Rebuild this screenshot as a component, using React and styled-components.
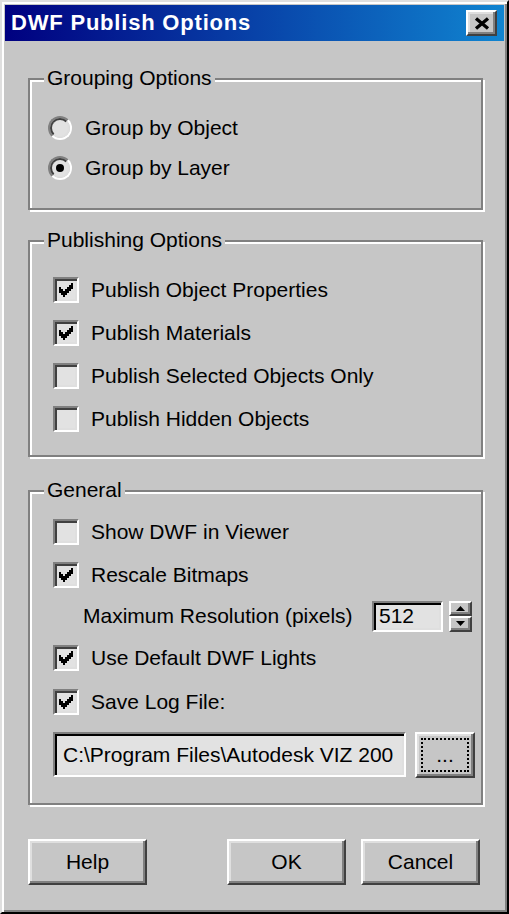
import React from 'react';
import styled, { createGlobalStyle } from 'styled-components';

const FACE = '#c6c6c6';
const FIELD = '#e2e2e2';

const GlobalStyle = createGlobalStyle`
  html, body {
    margin: 0;
    padding: 0;
    background: ${FACE};
  }
  body {
    font-family: "Liberation Sans", Arial, sans-serif;
  }
`;

const Window = styled.div`
  box-sizing: border-box;
  width: 509px;
  height: 914px;
  display: flex;
  flex-direction: column;
  padding: 3px;
  background: ${FACE};
  border: 2px solid;
  border-color: #dfdfdf #000 #000 #dfdfdf;
  box-shadow: inset 2px 2px 0 #fff, inset -2px -2px 0 #808080;
  font-family: "Liberation Sans", Arial, sans-serif;
  font-size: 21px;
  color: #000;
`;

const TitleBar = styled.div`
  flex: none;
  height: 36px;
  display: flex;
  align-items: center;
  justify-content: space-between;
  padding: 0 7px 0 6px;
  background: linear-gradient(90deg, #000080, #1084d0);
`;

const Title = styled.span`
  color: #fff;
  font-weight: bold;
  font-size: 22px;
  letter-spacing: 0.8px;
`;

const CloseButton = styled.button`
  box-sizing: border-box;
  width: 31px;
  height: 26px;
  padding: 0;
  display: flex;
  align-items: center;
  justify-content: center;
  background: ${FACE};
  border: 2px solid;
  border-color: #fff #404040 #404040 #fff;
  box-shadow: inset -2px -2px 0 #808080, inset 2px 2px 0 #dfdfdf;
`;

const Body = styled.div`
  flex: 1;
  display: flex;
  flex-direction: column;
  padding: 37px 21px 0 23px;
`;

const Group = styled.div`
  position: relative;
  box-sizing: border-box;
  height: ${p => p.$h}px;
  margin-top: ${p => p.$mt || 0}px;
  padding-top: ${p => p.$pt}px;
  border: 2px solid #808080;
  box-shadow: inset 2px 2px 0 #fff, 2px 2px 0 #fff;
`;

const GroupLabel = styled.span`
  position: absolute;
  left: 14px;
  top: -14px;
  padding: 0 3px;
  line-height: 24px;
  background: ${FACE};
`;

const Row = styled.div`
  display: flex;
  align-items: center;
  height: ${p => p.$h || 43}px;
  padding-left: ${p => (p.$indent === undefined ? 23 : p.$indent)}px;
  margin-top: ${p => p.$mt || 0}px;
`;

const RadioOuter = styled.span`
  box-sizing: border-box;
  flex: none;
  width: 24px;
  height: 24px;
  margin-right: 13px;
  border-radius: 50%;
  border: 2px solid;
  border-color: #808080 #fff #fff #808080;
  display: flex;
  align-items: center;
  justify-content: center;
`;

const RadioInner = styled.span`
  box-sizing: border-box;
  width: 20px;
  height: 20px;
  border-radius: 50%;
  border: 2px solid;
  border-color: #404040 #dfdfdf #dfdfdf #404040;
  background: ${FIELD};
  display: flex;
  align-items: center;
  justify-content: center;
`;

const Dot = styled.span`
  width: 8px;
  height: 8px;
  border-radius: 50%;
  background: #000;
`;

const Box = styled.span`
  box-sizing: border-box;
  flex: none;
  width: 26px;
  height: 26px;
  margin-right: 12px;
  display: flex;
  align-items: center;
  justify-content: center;
  background: ${FIELD};
  border: 2px solid;
  border-color: #808080 #fff #fff #808080;
  box-shadow: inset 2px 2px 0 #404040, inset -2px -2px 0 #dfdfdf;
`;

const Label = styled.span`
  white-space: nowrap;
  width: ${p => (p.$w ? `${p.$w}px` : 'auto')};
  flex: none;
`;

const Field = styled.div`
  box-sizing: border-box;
  flex: none;
  width: ${p => p.$w}px;
  height: ${p => p.$h}px;
  padding-left: ${p => p.$pl || 4}px;
  display: flex;
  align-items: center;
  overflow: hidden;
  white-space: nowrap;
  background: ${FIELD};
  border: 2px solid;
  border-color: #808080 #fff #fff #808080;
  box-shadow: inset 2px 2px 0 #000, inset -2px -2px 0 #dfdfdf;
`;

const Spin = styled.div`
  display: flex;
  flex-direction: column;
  margin-left: 6px;
  width: 23px;
`;

const SpinButton = styled.button`
  box-sizing: border-box;
  width: 23px;
  height: ${p => p.$h}px;
  padding: 0;
  display: flex;
  align-items: center;
  justify-content: center;
  background: ${FACE};
  border: 2px solid;
  border-color: #fff #404040 #404040 #fff;
  box-shadow: inset -2px -2px 0 #808080;
`;

const Button = styled.button`
  box-sizing: border-box;
  flex: none;
  width: ${p => p.$w}px;
  height: ${p => p.$h || 46}px;
  margin-left: ${p => p.$ml || 0}px;
  padding: ${p => p.$pad || 0}px;
  display: flex;
  align-items: stretch;
  justify-content: center;
  font: inherit;
  color: #000;
  background: ${FACE};
  border: 2px solid;
  border-color: #fff #404040 #404040 #fff;
  box-shadow: inset -2px -2px 0 #808080, inset 2px 2px 0 #dfdfdf;
`;

const ButtonText = styled.span`
  display: flex;
  align-items: center;
  justify-content: center;
  flex: 1;
`;

const FocusRect = styled.span`
  flex: 1;
  display: flex;
  align-items: center;
  justify-content: center;
  border: 2px dotted #000;
`;

const ButtonRow = styled.div`
  display: flex;
  margin-top: 34px;
  padding-right: 3px;
`;

const Spacer = styled.div`
  flex: 1;
`;

const CheckMark = () => (
  <svg width="14" height="14" viewBox="0 0 7 7" shapeRendering="crispEdges">
    <path
      d="M0 2h1v3H0z M1 3h1v3H1z M2 4h1v3H2z M3 3h1v3H3z M4 2h1v3H4z M5 1h1v3H5z M6 0h1v3H6z"
      fill="#000"
    />
  </svg>
);

const Check = ({ checked, children }) => (
  <Row>
    <Box>{checked && <CheckMark />}</Box>
    <Label>{children}</Label>
  </Row>
);

const Radio = ({ checked, children }) => (
  <Row $h={40} $indent={18}>
    <RadioOuter>
      <RadioInner>{checked && <Dot />}</RadioInner>
    </RadioOuter>
    <Label>{children}</Label>
  </Row>
);

const App = () => (
  <>
    <GlobalStyle />
    <Window>
      <TitleBar>
        <Title>DWF Publish Options</Title>
        <CloseButton>
          <svg width="16" height="13" viewBox="0 0 16 13">
            <path d="M2 1.5 L14 11.5 M14 1.5 L2 11.5" stroke="#000" strokeWidth="3.4" />
          </svg>
        </CloseButton>
      </TitleBar>
      <Body>
        <Group $h={132} $pt={28}>
          <GroupLabel>Grouping Options</GroupLabel>
          <Radio>Group by Object</Radio>
          <Radio checked>Group by Layer</Radio>
        </Group>

        <Group $h={217} $pt={26} $mt={30}>
          <GroupLabel>Publishing Options</GroupLabel>
          <Check checked>Publish Object Properties</Check>
          <Check checked>Publish Materials</Check>
          <Check>Publish Selected Objects Only</Check>
          <Check>Publish Hidden Objects</Check>
        </Group>

        <Group $h={315} $pt={18} $mt={33}>
          <GroupLabel>General</GroupLabel>
          <Check>Show DWF in Viewer</Check>
          <Check checked>Rescale Bitmaps</Check>
          <Row $h={40} $indent={53}>
            <Label $w={289}>Maximum Resolution (pixels)</Label>
            <Field $w={71} $h={31} $pl={5}>512</Field>
            <Spin>
              <SpinButton $h={15}>
                <svg width="9" height="5" viewBox="0 0 9 5">
                  <path d="M4.5 0 L9 5 H0 Z" fill="#000" />
                </svg>
              </SpinButton>
              <SpinButton $h={16}>
                <svg width="9" height="5" viewBox="0 0 9 5">
                  <path d="M0 0 H9 L4.5 5 Z" fill="#000" />
                </svg>
              </SpinButton>
            </Spin>
          </Row>
          <Check checked>Use Default DWF Lights</Check>
          <Row $h={45}>
            <Box>
              <CheckMark />
            </Box>
            <Label>Save Log File:</Label>
          </Row>
          <Row $h={45} $mt={8}>
            <Field $w={353} $h={45} $pl={8}>
              C:\Program Files\Autodesk VIZ 200
            </Field>
            <Button $w={60} $ml={9} $pad={4}>
              <FocusRect>...</FocusRect>
            </Button>
          </Row>
        </Group>

        <ButtonRow>
          <Button $w={119}>
            <ButtonText>Help</ButtonText>
          </Button>
          <Spacer />
          <Button $w={119}>
            <ButtonText>OK</ButtonText>
          </Button>
          <Button $w={119} $ml={15}>
            <ButtonText>Cancel</ButtonText>
          </Button>
        </ButtonRow>
      </Body>
    </Window>
  </>
);

export default App;
